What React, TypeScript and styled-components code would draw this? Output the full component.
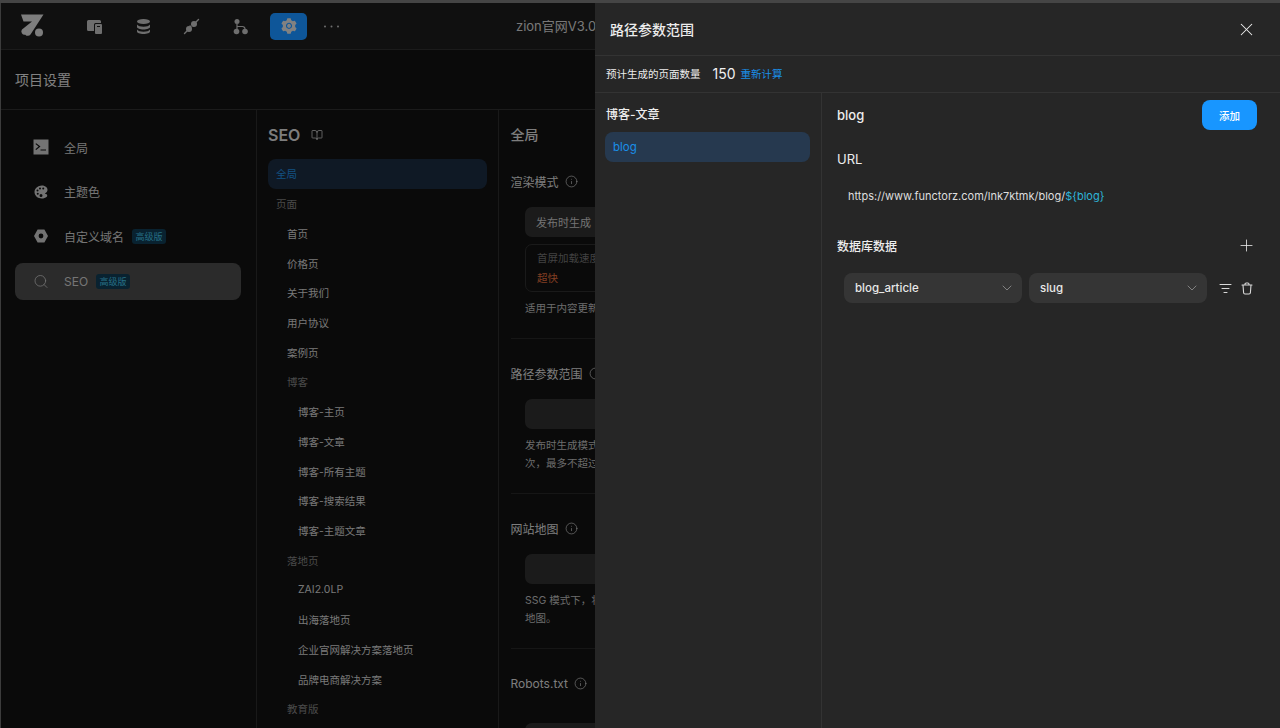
import React from "react";
import styled, { createGlobalStyle } from "styled-components";
import { AiFillSetting } from "react-icons/ai";
import { IoColorPalette } from "react-icons/io5";
import { BookOpen, Info, X, Plus, ChevronDown, Search } from "lucide-react";

const FONT = `Inter, "Noto Sans CJK SC", sans-serif`;

const GlobalStyle = createGlobalStyle`
    html, body {
        margin: 0;
        padding: 0;
        height: 728px;
        overflow: hidden;
        background: #0a0a0a;
        font-family: ${FONT};
    }
    * {
        box-sizing: border-box;
    }
`;

const Shell = styled.div`
    display: flex;
    flex-direction: column;
    width: 1280px;
    height: 728px;
    overflow: hidden;
`;
const TopStrip = styled.div`
    height: 3px;
    flex: none;
    background: #454545;
`;
const Stage = styled.div`
    position: relative;
    flex: 1;
    min-height: 0;
    display: flex;
    flex-direction: column;
    overflow: hidden;
    background: #111111;
    border-left: 1px solid #3c3c3c;
`;
const Mask = styled.div`
    position: absolute;
    inset: 0;
    background: rgba(0, 0, 0, 0.4);
`;

/* top bar */
const TopBar = styled.div`
    height: 47px;
    flex: none;
    display: flex;
    align-items: center;
    background: #1c1c1c;
    border-bottom: 1px solid #2e2e2e;
    position: relative;
    padding-left: 19px;
`;
const Logo = styled.svg`
    width: 24px;
    height: 24px;
    margin-right: 32px;
    color: #d0d0d0;
`;
const NavIcons = styled.div`
    display: flex;
    align-items: center;
    gap: 11.5px;
`;
const NavButton = styled.div<{ $active?: boolean }>`
    width: 37px;
    height: 27px;
    display: flex;
    align-items: center;
    justify-content: center;
    border-radius: 5px;
    color: ${(p) => (p.$active ? "#d8d8d8" : "#b8b8b8")};
    background: ${(p) => (p.$active ? "#1890ff" : "transparent")};
`;
const MoreButton = styled(NavButton)`
    margin-left: -6px;
`;
const ProjectName = styled.div`
    position: absolute;
    left: 515px;
    top: 14px;
    font-size: 13px;
    line-height: 18px;
    white-space: nowrap;
    color: #c8c8c8;
`;
const TitleBar = styled.div`
    height: 60px;
    flex: none;
    display: flex;
    align-items: center;
    padding: 0 0 2px 14px;
    font-size: 14px;
    color: #d8d8d8;
    background: #111111;
    border-bottom: 1px solid #2e2e2e;
`;

/* three columns */
const Columns = styled.div`
    flex: 1;
    min-height: 0;
    display: grid;
    grid-template-columns: 256px 242px 1fr;
`;
const SideColumn = styled.div`
    border-right: 1px solid #2a2a2a;
    padding: 19px 15px 0 14px;
    display: flex;
    flex-direction: column;
    gap: 7.7px;
`;
const SideItem = styled.div<{ $active?: boolean }>`
    height: 37px;
    display: flex;
    align-items: center;
    gap: 15px;
    padding: 0 0 1px 18px;
    border-radius: 8px;
    font-size: 12px;
    color: #c4c4c4;
    background: ${(p) => (p.$active ? "#484848" : "transparent")};
`;
const SideGlyph = styled.span`
    width: 16px;
    height: 16px;
    flex: none;
    display: flex;
    align-items: center;
    justify-content: center;
    color: #c0c0c0;
`;
const Badge = styled.span`
    margin-left: -7px;
    padding: 0 3.5px;
    height: 15px;
    line-height: 15px;
    border-radius: 3px;
    font-size: 9px;
    color: #3fb6dc;
    background: #0f3a50;
`;

const TreeColumn = styled.div`
    border-right: 1px solid #2a2a2a;
    padding: 0 11px;
    overflow: hidden;
`;
const TreeTitle = styled.div`
    height: 49px;
    display: flex;
    align-items: center;
    gap: 11px;
    font-size: 16px;
    font-weight: 600;
    color: #d0d0d0;
`;
const TreeRow = styled.div<{ $depth: number; $kind?: "active" | "group" }>`
    height: 29.72px;
    display: flex;
    align-items: center;
    border-radius: 8px;
    padding-left: ${(p) => 8 + p.$depth * 11}px;
    font-size: 10.5px;
    white-space: nowrap;
    color: ${(p) =>
        p.$kind === "active" ? "#1f86d8" : p.$kind === "group" ? "#7c7c7c" : "#c8c8c8"};
    background: ${(p) => (p.$kind === "active" ? "#1a2a3e" : "transparent")};
`;

const ContentColumn = styled.div`
    padding: 0 11.5px;
    overflow: hidden;
    color: #c8c8c8;
`;
const ContentTitle = styled.div`
    height: 49px;
    display: flex;
    align-items: center;
    padding-bottom: 2px;
    font-size: 14px;
    font-weight: 500;
    color: #d0d0d0;
`;
const Section = styled.div`
    padding: 13px 0 20px;
    border-bottom: 1px solid #262626;
    margin-bottom: 12px;
`;
const SectionLabel = styled.div<{ $gap?: number }>`
    display: flex;
    align-items: center;
    gap: 6px;
    height: 19px;
    font-size: 12px;
    margin-bottom: ${(p) => p.$gap ?? 16}px;
    color: #d0d0d0;
    white-space: nowrap;
`;
const SectionBody = styled.div`
    padding-left: 14.5px;
    width: 400px;
`;
const FakeSelect = styled.div`
    height: 30px;
    display: flex;
    align-items: center;
    padding-left: 11px;
    border-radius: 7px;
    font-size: 11px;
    color: #c0c0c0;
    background: #2e2e2e;
`;
const SpeedCard = styled.div`
    margin: 7px 0 1px;
    height: 48px;
    padding: 6px 11px;
    border: 1px solid #2c2c2c;
    border-radius: 7px;
`;
const SpeedLabel = styled.div`
    font-size: 10.5px;
    line-height: 16px;
    color: #6e6e6e;
`;
const SpeedValue = styled.div`
    margin-top: 4px;
    font-size: 10.5px;
    line-height: 16px;
    color: #d8683a;
`;
const Hint = styled.div`
    margin-top: 7px;
    padding-top: 1px;
    font-size: 10.5px;
    line-height: 18px;
    color: #b4b4b4;
`;

/* drawer */
const Drawer = styled.div`
    position: absolute;
    top: 0;
    right: 0;
    bottom: 0;
    width: 685px;
    display: flex;
    flex-direction: column;
    background: #262626;
    color: #ededed;
`;
const DrawerHead = styled.div`
    height: 53px;
    flex: none;
    display: flex;
    align-items: center;
    justify-content: space-between;
    padding: 0 23.5px 0 15px;
    font-size: 14px;
    font-weight: 500;
    border-bottom: 1px solid #333333;
`;
const CountRow = styled.div`
    height: 37px;
    flex: none;
    display: flex;
    align-items: center;
    padding: 0 0 1px 11px;
    font-size: 10.5px;
    border-bottom: 1px solid #333333;
`;
const CountValue = styled.span`
    margin-left: 12px;
    font-size: 14px;
    color: #f0f0f0;
`;
const Recalc = styled.span`
    margin-left: 5px;
    color: #1a8fe8;
`;
const DrawerBody = styled.div`
    flex: 1;
    min-height: 0;
    display: grid;
    grid-template-columns: 227px 1fr;
`;
const PathList = styled.div`
    border-right: 1px solid #333333;
    padding: 13px 11px 0 10px;
`;
const PathTitle = styled.div`
    height: 18px;
    line-height: 18px;
    margin: 0 0 8px 1px;
    font-size: 12px;
    font-weight: 500;
`;
const PathItem = styled.div`
    height: 29.5px;
    display: flex;
    align-items: center;
    padding-left: 8px;
    border-radius: 8px;
    font-size: 11.5px;
    color: #1a8fe8;
    background: #26394f;
`;
const Editor = styled.div`
    padding: 7px 23px 0 15px;
`;
const EditorHead = styled.div`
    height: 30px;
    display: flex;
    align-items: center;
    justify-content: space-between;
    font-size: 13px;
    font-weight: 500;
`;
const AddButton = styled.div`
    width: 55px;
    height: 30px;
    display: flex;
    align-items: center;
    justify-content: center;
    border-radius: 8px;
    font-size: 10.5px;
    font-weight: 500;
    color: #ffffff;
    background: #1896ff;
`;
const FieldLabel = styled.div`
    margin-top: 20px;
    height: 18px;
    line-height: 18px;
    font-size: 13px;
`;
const UrlLine = styled.div`
    margin-top: 19px;
    padding-left: 11px;
    height: 18px;
    line-height: 18px;
    font-size: 11px;
    color: #dedede;
    white-space: nowrap;
`;
const UrlVar = styled.span`
    color: #2eb4d8;
`;
const DataHead = styled.div`
    margin-top: 31px;
    height: 18px;
    display: flex;
    align-items: center;
    justify-content: space-between;
    padding-right: 1.5px;
    font-size: 12px;
    font-weight: 500;
`;
const DataRow = styled.div`
    margin-top: 19px;
    padding-left: 7px;
    display: flex;
    align-items: center;
`;
const DataSelect = styled.div`
    width: 178px;
    height: 30px;
    margin-right: 7px;
    display: flex;
    align-items: center;
    justify-content: space-between;
    padding: 0 7px 0 11px;
    border-radius: 8px;
    font-size: 11.5px;
    font-weight: 500;
    color: #e8e8e8;
    background: #353535;
`;
const RowActions = styled.div`
    margin-left: 5px;
    display: flex;
    align-items: center;
    gap: 9px;
    color: #d8d8d8;
`;

const tree: { label: string; depth: number; kind?: "active" | "group" }[] = [
    { label: "全局", depth: 0, kind: "active" },
    { label: "页面", depth: 0, kind: "group" },
    { label: "首页", depth: 1 },
    { label: "价格页", depth: 1 },
    { label: "关于我们", depth: 1 },
    { label: "用户协议", depth: 1 },
    { label: "案例页", depth: 1 },
    { label: "博客", depth: 1, kind: "group" },
    { label: "博客-主页", depth: 2 },
    { label: "博客-文章", depth: 2 },
    { label: "博客-所有主题", depth: 2 },
    { label: "博客-搜索结果", depth: 2 },
    { label: "博客-主题文章", depth: 2 },
    { label: "落地页", depth: 1, kind: "group" },
    { label: "ZAI2.0LP", depth: 2 },
    { label: "出海落地页", depth: 2 },
    { label: "企业官网解决方案落地页", depth: 2 },
    { label: "品牌电商解决方案", depth: 2 },
    { label: "教育版", depth: 1, kind: "group" },
];

const TerminalIcon = () => (
    <svg width="16" height="16" viewBox="0 0 16 16">
        <path
            fill="currentColor"
            fillRule="evenodd"
            d="M.5.5h15v15H.5zM3.200 4.200l-.8.8L5.600 7.600 2.400 10.200l.8.9 4.300-3.500zM7.500 10.400v1.200h5.500v-1.200z"
        />
    </svg>
);

const HexIcon = () => (
    <svg width="16" height="16" viewBox="0 0 16 16">
        <path
            fill="currentColor"
            fillRule="evenodd"
            d="M4.600 1.600h6.800L15 8l-3.600 6.400H4.600L1 8zM8 5.600a2.400 2.400 0 1 0 0 4.800 2.400 2.400 0 0 0 0-4.800z"
        />
    </svg>
);

const PagesIcon = () => (
    <svg width="17" height="17" viewBox="0 0 17 17">
        <path fill="currentColor" d="M2.500 2h11A1.500 1.500 0 0 1 15 3.500V5H9.500A1.500 1.500 0 0 0 8 6.500V13H2.500A1.500 1.500 0 0 1 1 11.500v-8A1.500 1.500 0 0 1 2.500 2z" />
        <path fill="currentColor" fillRule="evenodd" d="M10 6h5a1 1 0 0 1 1 1v8a1 1 0 0 1-1 1h-5a1 1 0 0 1-1-1V7a1 1 0 0 1 1-1zm1 2v1h3V8z" />
    </svg>
);

const DataIcon = () => (
    <svg width="17" height="17" viewBox="0 0 17 17" fill="currentColor">
        <ellipse cx="8.500" cy="3.500" rx="6.500" ry="2.500" />
        <path d="M2 6.500c1 1.500 3.500 2.200 6.500 2.200S14 8 15 6.500V9c0 1.300-3 2.500-6.500 2.500S2 10.300 2 9z" />
        <path d="M2 11.500c1 1.500 3.500 2.200 6.500 2.200s5.500-.7 6.500-2.200V13.500C15 15 12 16 8.500 16S2 15 2 13.500z" />
    </svg>
);

const PlugIcon = () => (
    <svg width="17" height="17" viewBox="0 0 17 17" fill="currentColor" stroke="currentColor" strokeLinecap="round">
        <circle cx="6" cy="11" r="3" stroke="none" />
        <circle cx="11" cy="6" r="3" stroke="none" />
        <path d="M1.500 15.500 4 13M13 4l2.500-2.500M7 8l1 1M9 6.500l1.500 1.500" strokeWidth="1.400" />
    </svg>
);

const FlowIcon = () => (
    <svg width="17" height="17" viewBox="0 0 17 17" fill="currentColor">
        <circle cx="5" cy="3.500" r="2.500" />
        <circle cx="4.500" cy="13.500" r="2.800" />
        <circle cx="13" cy="13.500" r="2.800" />
        <path d="M5 6v5M5 8.500h5.500a2.500 2.500 0 0 1 2.500 2.500" fill="none" stroke="currentColor" strokeWidth="1.200" />
    </svg>
);

const DotsIcon = () => (
    <svg width="17" height="17" viewBox="0 0 17 17" fill="currentColor">
        <circle cx="2" cy="8.500" r="1" />
        <circle cx="8.500" cy="8.500" r="1" />
        <circle cx="15" cy="8.500" r="1" />
    </svg>
);

const FilterIcon = () => (
    <svg width="13" height="13" viewBox="0 0 13 13" fill="none" stroke="currentColor" strokeWidth="1.100" strokeLinecap="round">
        <path d="M1 2.500h11M3 6.500h7M5 10.500h3" />
    </svg>
);

const BinIcon = () => (
    <svg width="12" height="13" viewBox="0 0 12 13" fill="none" stroke="currentColor" strokeWidth="1.100" strokeLinecap="round" strokeLinejoin="round">
        <path d="M1 3h10M4 3V2.200Q4 1 5.200 1h1.600Q8 1 8 2.200V3M2 3l.6 7.800Q2.700 12 4 12h4q1.300 0 1.400-1.200L10 3" />
    </svg>
);

const App = () => {
    return (
        <Shell>
            <GlobalStyle />
            <TopStrip />
            <Stage>
                <TopBar>
                    <Logo viewBox="0 0 24 24">
                        <path fill="currentColor" d="M1 .5h22.500L10.500 20.500a3.300 3.300 0 0 1-5.200.2 3.300 3.300 0 0 1-3.300-5.200L12 7.500H3.500z" />
                        <circle cx="19" cy="18.500" r="4" fill="currentColor" />
                    </Logo>
                    <NavIcons>
                        <NavButton><PagesIcon /></NavButton>
                        <NavButton><DataIcon /></NavButton>
                        <NavButton><PlugIcon /></NavButton>
                        <NavButton><FlowIcon /></NavButton>
                        <NavButton $active><AiFillSetting size={18} /></NavButton>
                        <MoreButton><DotsIcon /></MoreButton>
                    </NavIcons>
                    <ProjectName>zion官网V3.0</ProjectName>
                </TopBar>
                <TitleBar>项目设置</TitleBar>
                <Columns>
                    <SideColumn>
                        <SideItem>
                            <SideGlyph><TerminalIcon /></SideGlyph>
                            全局
                        </SideItem>
                        <SideItem>
                            <SideGlyph><IoColorPalette size={18} /></SideGlyph>
                            主题色
                        </SideItem>
                        <SideItem>
                            <SideGlyph><HexIcon /></SideGlyph>
                            自定义域名
                            <Badge>高级版</Badge>
                        </SideItem>
                        <SideItem $active>
                            <SideGlyph><Search size={17} strokeWidth={1.2} /></SideGlyph>
                            SEO
                            <Badge>高级版</Badge>
                        </SideItem>
                    </SideColumn>
                    <TreeColumn>
                        <TreeTitle>
                            SEO
                            <BookOpen size={12} strokeWidth={1.5} />
                        </TreeTitle>
                        {tree.map((row) => (
                            <TreeRow key={row.label} $depth={row.depth} $kind={row.kind}>
                                {row.label}
                            </TreeRow>
                        ))}
                    </TreeColumn>
                    <ContentColumn>
                        <ContentTitle>全局</ContentTitle>
                        <Section>
                            <SectionLabel>渲染模式 <Info size={13} strokeWidth={1.2} /></SectionLabel>
                            <SectionBody>
                                <FakeSelect>发布时生成</FakeSelect>
                                <SpeedCard>
                                    <SpeedLabel>首屏加载速度</SpeedLabel>
                                    <SpeedValue>超快</SpeedValue>
                                </SpeedCard>
                                <Hint>适用于内容更新</Hint>
                            </SectionBody>
                        </Section>
                        <Section>
                            <SectionLabel>路径参数范围 <Info size={13} strokeWidth={1.2} /></SectionLabel>
                            <SectionBody>
                                <FakeSelect />
                                <Hint>发布时生成模式<br />次，最多不超过</Hint>
                            </SectionBody>
                        </Section>
                        <Section>
                            <SectionLabel>网站地图 <Info size={13} strokeWidth={1.2} /></SectionLabel>
                            <SectionBody>
                                <FakeSelect />
                                <Hint>SSG 模式下，将<br />地图。</Hint>
                            </SectionBody>
                        </Section>
                        <Section>
                            <SectionLabel $gap={30}>Robots.txt <Info size={13} strokeWidth={1.2} /></SectionLabel>
                            <SectionBody>
                                <FakeSelect />
                            </SectionBody>
                        </Section>
                    </ContentColumn>
                </Columns>
                <Mask />
                <Drawer>
                    <DrawerHead>
                        路径参数范围
                        <X size={21} strokeWidth={1.2} />
                    </DrawerHead>
                    <CountRow>
                        预计生成的页面数量
                        <CountValue>150</CountValue>
                        <Recalc>重新计算</Recalc>
                    </CountRow>
                    <DrawerBody>
                        <PathList>
                            <PathTitle>博客-文章</PathTitle>
                            <PathItem>blog</PathItem>
                        </PathList>
                        <Editor>
                            <EditorHead>
                                blog
                                <AddButton>添加</AddButton>
                            </EditorHead>
                            <FieldLabel>URL</FieldLabel>
                            <UrlLine>
                                https://www.functorz.com/lnk7ktmk/blog/<UrlVar>{"${blog}"}</UrlVar>
                            </UrlLine>
                            <DataHead>
                                数据库数据
                                <Plus size={19} strokeWidth={1} />
                            </DataHead>
                            <DataRow>
                                <DataSelect>
                                    blog_article
                                    <ChevronDown size={16} strokeWidth={1} color="#a8a8a8" />
                                </DataSelect>
                                <DataSelect>
                                    slug
                                    <ChevronDown size={16} strokeWidth={1} color="#a8a8a8" />
                                </DataSelect>
                                <RowActions>
                                    <FilterIcon />
                                    <BinIcon />
                                </RowActions>
                            </DataRow>
                        </Editor>
                    </DrawerBody>
                </Drawer>
            </Stage>
        </Shell>
    );
};

export default App;
